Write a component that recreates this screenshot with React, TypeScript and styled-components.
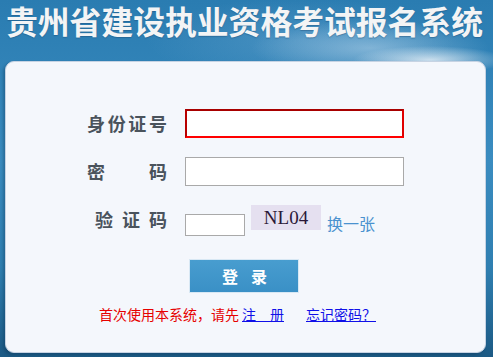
import React from "react";
import styled, { createGlobalStyle } from "styled-components";

const Global = createGlobalStyle`
  html, body { margin: 0; padding: 0; }
  body {
    width: 493px;
    height: 357px;
    overflow: hidden;
    font-family: "Noto Sans CJK SC", "Liberation Sans", sans-serif;
    background:
      radial-gradient(ellipse 110px 20px at 430px 60px, rgba(235,242,248,0.8), rgba(235,242,248,0) 70%),
      radial-gradient(ellipse 170px 40px at 370px 48px, rgba(175,208,232,0.6), rgba(175,208,232,0) 70%),
      radial-gradient(ellipse 220px 60px at 300px 40px, rgba(120,175,215,0.35), rgba(120,175,215,0) 70%),
      linear-gradient(180deg, #2a7cb1 0%, #3a8cc0 45%, #2f7fb1 75%, #1c5a84 100%);
  }
`;

const Page = styled.div`
  display: flex;
  flex-direction: column;
  width: 493px;
  height: 357px;
`;

const Title = styled.h1`
  margin: 0;
  padding: 0 0 0 6px;
  height: 41px;
  line-height: 41px;
  font-family: "Noto Sans CJK SC", sans-serif;
  font-size: 31.8px;
  font-weight: 700;
  color: #f3f4f5;
  white-space: nowrap;
  text-shadow: 0 1px 1px rgba(20, 60, 100, 0.35);
`;

const Panel = styled.div`
  margin: 20px 0 0 5px;
  width: 481px;
  height: 292px;
  box-sizing: border-box;
  background: #f4f7fc;
  border: 1px solid #c6d3e3;
  border-radius: 9px;
  box-shadow: -2px 2px 3px rgba(10, 50, 80, 0.35);
  padding: 47px 0 0 81px;
  display: flex;
  flex-direction: column;
`;

const Form = styled.div`
  display: grid;
  grid-template-columns: 80px 219px;
  column-gap: 18px;
  row-gap: 19px;
  grid-auto-rows: 29px;
`;

const Label = styled.div<{ $width: number }>`
  justify-self: end;
  width: ${(p) => p.$width}px;
  line-height: 29px;
  height: 29px;
  font-size: 18px;
  font-weight: 700;
  color: #4a535c;
  text-align: justify;
  text-align-last: justify;
  white-space: nowrap;
`;

const TextInput = styled.input<{ $active?: boolean }>`
  box-sizing: border-box;
  width: 219px;
  height: 29px;
  margin: 0;
  padding: 0 4px;
  background: #fff;
  outline: none;
  border-style: solid;
  border-width: ${(p) => (p.$active ? "2px" : "1px")};
  border-color: ${(p) =>
    p.$active ? "#a80000 #e00000 #ff0000 #b80000" : "#a9a9a9"};
  font-size: 14px;
`;

const CaptchaRow = styled.div`
  display: flex;
  align-items: flex-start;
  width: 260px;
`;

const CaptchaInput = styled.input`
  box-sizing: border-box;
  width: 60px;
  height: 22px;
  margin: 9px 0 0 0;
  padding: 0 3px;
  background: #fff;
  border: 1px solid #a9a9a9;
  outline: none;
`;

const CaptchaImage = styled.div`
  margin-left: 6px;
  width: 70px;
  height: 25px;
  background: #e5e0f0;
  font-family: "Liberation Serif", serif;
  font-size: 19px;
  line-height: 25px;
  color: #2a1838;
  text-align: center;
`;

const SwapLink = styled.a`
  margin: 8px 0 0 6px;
  font-size: 16px;
  line-height: 20px;
  color: #4a92cf;
  text-decoration: none;
  cursor: pointer;
`;

const ButtonRow = styled.div`
  display: flex;
  padding-left: 102px;
  margin-top: 25px;
`;

const LoginButton = styled.button`
  box-sizing: border-box;
  width: 110px;
  height: 34px;
  border: 1px solid #d8e8f4;
  background: linear-gradient(180deg, #489dcf 0%, #3a90c6 100%);
  color: #fff;
  font-family: "Noto Sans CJK SC", sans-serif;
  font-size: 16px;
  font-weight: 700;
  letter-spacing: 13px;
  padding: 0 0 0 14px;
  cursor: pointer;
`;

const Footer = styled.div`
  display: flex;
  align-items: center;
  margin-top: 11px;
  padding-left: 12px;
  font-size: 14px;
  line-height: 20px;
  white-space: nowrap;
`;

const Notice = styled.span`
  color: #e60000;
`;

const FooterLink = styled.a<{ $gap: number }>`
  margin-left: ${(p) => p.$gap}px;
  color: #1010e8;
  text-decoration: underline;
  cursor: pointer;
  white-space: pre;
`;

export default function App() {
  return (
    <>
      <Global />
      <Page>
        <Title>贵州省建设执业资格考试报名系统</Title>
        <Panel>
          <Form>
            <Label $width={80}>身份证号</Label>
            <TextInput $active />
            <Label $width={80}>密 码</Label>
            <TextInput type="password" />
            <Label $width={72}>验 证 码</Label>
            <CaptchaRow>
              <CaptchaInput />
              <CaptchaImage>NL04</CaptchaImage>
              <SwapLink>换一张</SwapLink>
            </CaptchaRow>
          </Form>
          <ButtonRow>
            <LoginButton>登录</LoginButton>
          </ButtonRow>
          <Footer>
            <Notice>首次使用本系统，请先</Notice>
            <FooterLink $gap={3}>注　册</FooterLink>
            <FooterLink $gap={22}>忘记密码？</FooterLink>
          </Footer>
        </Panel>
      </Page>
    </>
  );
}
